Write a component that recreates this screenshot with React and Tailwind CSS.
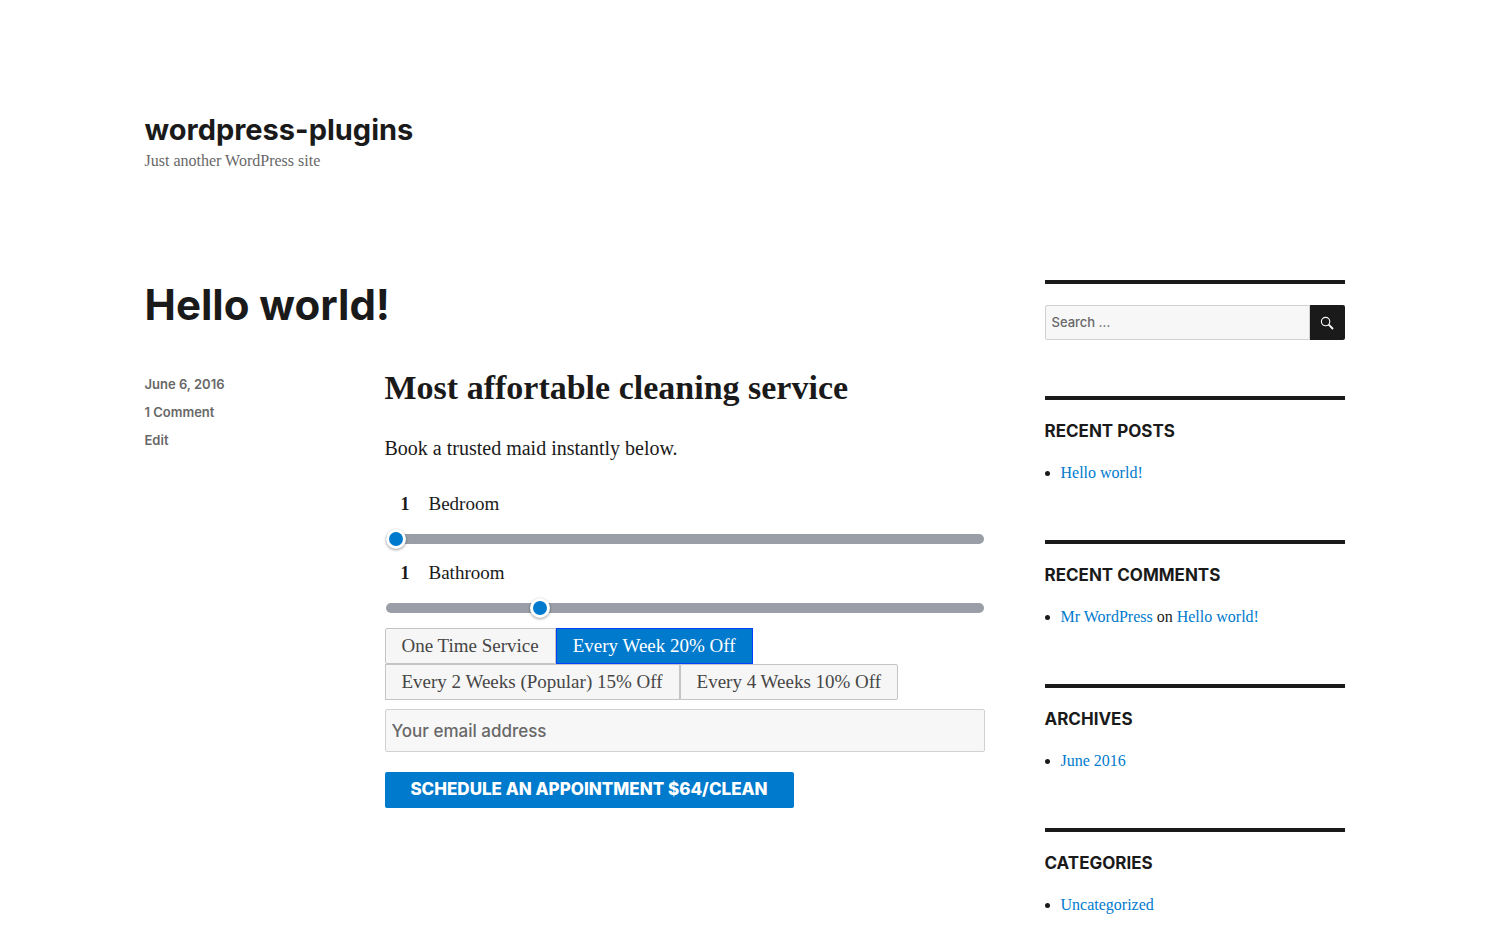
import { useState } from "react";

const frequencies = [
  { label: "One Time Service", corners: "rounded-l-xs" },
  { label: "Every Week 20% Off", corners: "" },
  { label: "Every 2 Weeks (Popular) 15% Off", corners: "" },
  { label: "Every 4 Weeks 10% Off", corners: "rounded-r-xs" },
];

const linkClass = "text-[#007acc] hover:text-[#686868]";

function Slider({ id, label, min, max, initial }) {
  const [value, setValue] = useState(initial);
  return (
    <div className="pb-[9px]">
      <label htmlFor={id} className="flex h-7 items-center pl-4 text-[19px] leading-7">
        <strong className="w-7 text-lg">{value}</strong>
        {label}
      </label>
      <div className="flex h-8 items-center pt-[10px]">
        <input
          id={id}
          type="range"
          min={min}
          max={max}
          value={value}
          onChange={(e) => setValue(Number(e.target.value))}
          className="mx-px h-[10px] w-full cursor-pointer appearance-none rounded-full bg-[#9a9ea6] [&::-webkit-slider-thumb]:size-5 [&::-webkit-slider-thumb]:appearance-none [&::-webkit-slider-thumb]:rounded-full [&::-webkit-slider-thumb]:border-3 [&::-webkit-slider-thumb]:border-white [&::-webkit-slider-thumb]:bg-[#007acc] [&::-webkit-slider-thumb]:shadow-[0_1px_3px_rgba(0,0,0,0.4)]"
        />
      </div>
    </div>
  );
}

function Widget({ title, last = false, children }) {
  return (
    <section className={`border-t-4 border-[#1a1a1a] pt-5 ${last ? "" : "pb-14"}`}>
      <h2 className="text-[17px] leading-[22px] font-bold uppercase font-[Inter,sans-serif]">{title}</h2>
      <ul className="mt-5 list-disc pl-4 text-base leading-[22px]">
        <li>{children}</li>
      </ul>
    </section>
  );
}

export default function App() {
  const [selected, setSelected] = useState(1);
  return (
    <div className="bg-white px-6 text-[#1a1a1a] font-['Liberation_Serif',serif]">
      <div className="mx-auto max-w-[1200px]">
        <header className="pt-[112px] pb-[108px]">
          <h1 className="text-[29px] leading-9 font-bold font-[Inter,sans-serif]">
            <a href="#home">wordpress-plugins</a>
          </h1>
          <p className="mt-0.5 text-base leading-[22px] text-[#686868]">Just another WordPress site</p>
        </header>

        <div className="flex gap-[60px]">
          <main className="min-w-0 flex-1">
            <article>
              <h2 className="text-[42px] leading-[50px] font-bold font-[Inter,sans-serif]">
                <a href="#post">Hello world!</a>
              </h2>
              <div className="mt-10 flex gap-[60px]">
                <footer className="flex w-[180px] shrink-0 flex-col text-[13px] leading-7 font-semibold text-[#686868] font-[Inter,sans-serif]">
                  <a href="#date">June 6, 2016</a>
                  <a href="#comments">1 Comment</a>
                  <a href="#edit">Edit</a>
                </footer>
                <div className="min-w-0 flex-1">
                  <h3 className="text-[34px] leading-9 font-bold">Most affortable cleaning service</h3>
                  <p className="mt-7 text-xl leading-7">Book a trusted maid instantly below.</p>
                  <form className="pt-7" onSubmit={(e) => e.preventDefault()}>
                    <Slider id="bedrooms" label="Bedroom" min={1} max={5} initial={1} />
                    <Slider id="bathrooms" label="Bathroom" min={0} max={4} initial={1} />
                    <div className="flex flex-wrap" role="group" aria-label="Service frequency">
                      {frequencies.map((item, i) => (
                        <button
                          key={item.label}
                          type="button"
                          aria-pressed={selected === i}
                          onClick={() => setSelected(i)}
                          className={`h-9 cursor-pointer border px-4 text-[19px] leading-7 ${item.corners} ${
                            selected === i
                              ? "border-[#0040ff] bg-[#007acc] text-white"
                              : "border-[#c4c4c4] bg-[#f6f6f6] text-[#464646]"
                          }`}
                        >
                          {item.label}
                        </button>
                      ))}
                    </div>
                    <input
                      type="email"
                      aria-label="Your email address"
                      placeholder="Your email address"
                      className="mt-[9px] block h-[43px] w-full rounded-xs border border-[#d1d1d1] bg-[#f7f7f7] px-1.5 text-[17px] font-medium placeholder:text-[#686868] font-[Inter,sans-serif]"
                    />
                    <button
                      type="submit"
                      className="mt-5 h-9 min-w-[409px] cursor-pointer rounded-xs bg-[#007acc] px-5 text-[17px] font-extrabold text-white uppercase font-[Inter,sans-serif]"
                    >
                      Schedule an appointment $64/clean
                    </button>
                  </form>
                </div>
              </div>
            </article>
          </main>

          <aside className="w-[300px] shrink-0">
            <section className="border-t-4 border-[#1a1a1a] pt-[21px] pb-14">
              <form className="flex h-[35px]" role="search" onSubmit={(e) => e.preventDefault()}>
                <input
                  type="search"
                  aria-label="Search"
                  placeholder="Search …"
                  className="min-w-0 flex-1 rounded-l-xs border border-[#d1d1d1] bg-[#f7f7f7] px-1.5 text-[13px] font-medium placeholder:text-[#686868] font-[Inter,sans-serif]"
                />
                <button
                  type="submit"
                  aria-label="Submit search"
                  className="flex w-[35px] cursor-pointer items-center justify-center rounded-r-xs bg-[#1a1a1a] text-white"
                >
                  <svg width="14" height="14" viewBox="0 0 14 14" fill="none" stroke="currentColor" aria-hidden="true">
                    <circle cx="5.6" cy="5.6" r="4.2" strokeWidth="1.1" />
                    <path d="M8.7 8.7 L13 13" strokeWidth="1.8" />
                  </svg>
                </button>
              </form>
            </section>
            <Widget title="Recent Posts">
              <a href="#post" className={linkClass}>Hello world!</a>
            </Widget>
            <Widget title="Recent Comments">
              <a href="#author" className={linkClass}>Mr WordPress</a> on{" "}
              <a href="#post" className={linkClass}>Hello world!</a>
            </Widget>
            <Widget title="Archives">
              <a href="#archive" className={linkClass}>June 2016</a>
            </Widget>
            <Widget title="Categories" last>
              <a href="#category" className={linkClass}>Uncategorized</a>
            </Widget>
          </aside>
        </div>
      </div>
    </div>
  );
}
